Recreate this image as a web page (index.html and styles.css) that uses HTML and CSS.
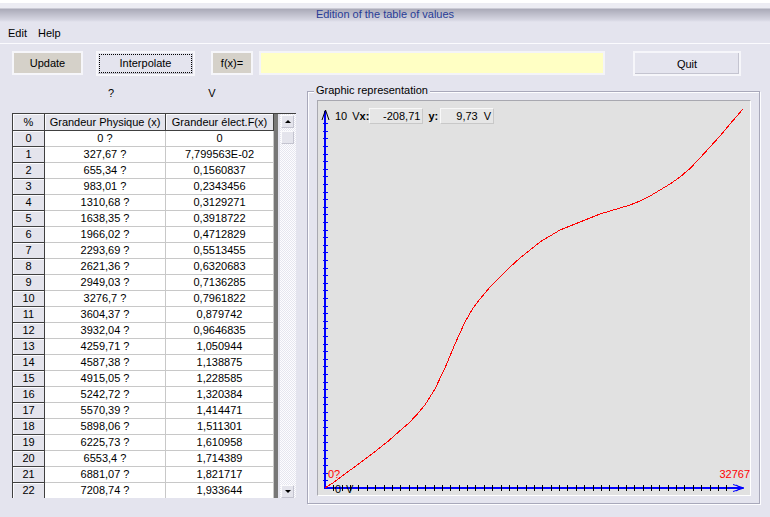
FILE: index.html
```html
<!DOCTYPE html>
<html>
<head>
<meta charset="utf-8">
<title>Edition of the table of values</title>
<link rel="stylesheet" href="styles.css">
</head>
<body>
<div class="window">
  <div class="titlebar">Edition of the table of values</div>
  <div class="menubar"><span class="menu">Edit</span><span class="menu">Help</span></div>
  <div class="toolbar">
    <button class="btn btn-beige btn-update">Update</button>
    <button class="btn btn-lav btn-interp"><span class="focus">Interpolate</span></button>
    <button class="btn btn-beige btn-fx">f(x)=</button>
    <div class="fx-input"></div>
    <button class="btn btn-lav btn-quit">Quit</button>
  </div>
  <div class="main">
    <div class="left">
      <div class="units"><span class="unit-x">?</span><span class="unit-y">V</span></div>
      <div class="grid-frame">
        <div class="grid-clip">
          <table class="grid">
            <colgroup><col class="c0"><col class="c1"><col class="c2"></colgroup>
            <thead><tr><th class="fix">%</th><th class="fix">Grandeur Physique (x)</th><th class="fix">Grandeur élect.F(x)</th></tr></thead>
            <tbody>
              <tr><td class="fix">0</td><td>0 ?</td><td>0</td></tr>
              <tr><td class="fix">1</td><td>327,67 ?</td><td>7,799563E-02</td></tr>
              <tr><td class="fix">2</td><td>655,34 ?</td><td>0,1560837</td></tr>
              <tr><td class="fix">3</td><td>983,01 ?</td><td>0,2343456</td></tr>
              <tr><td class="fix">4</td><td>1310,68 ?</td><td>0,3129271</td></tr>
              <tr><td class="fix">5</td><td>1638,35 ?</td><td>0,3918722</td></tr>
              <tr><td class="fix">6</td><td>1966,02 ?</td><td>0,4712829</td></tr>
              <tr><td class="fix">7</td><td>2293,69 ?</td><td>0,5513455</td></tr>
              <tr><td class="fix">8</td><td>2621,36 ?</td><td>0,6320683</td></tr>
              <tr><td class="fix">9</td><td>2949,03 ?</td><td>0,7136285</td></tr>
              <tr><td class="fix">10</td><td>3276,7 ?</td><td>0,7961822</td></tr>
              <tr><td class="fix">11</td><td>3604,37 ?</td><td>0,879742</td></tr>
              <tr><td class="fix">12</td><td>3932,04 ?</td><td>0,9646835</td></tr>
              <tr><td class="fix">13</td><td>4259,71 ?</td><td>1,050944</td></tr>
              <tr><td class="fix">14</td><td>4587,38 ?</td><td>1,138875</td></tr>
              <tr><td class="fix">15</td><td>4915,05 ?</td><td>1,228585</td></tr>
              <tr><td class="fix">16</td><td>5242,72 ?</td><td>1,320384</td></tr>
              <tr><td class="fix">17</td><td>5570,39 ?</td><td>1,414471</td></tr>
              <tr><td class="fix">18</td><td>5898,06 ?</td><td>1,511301</td></tr>
              <tr><td class="fix">19</td><td>6225,73 ?</td><td>1,610958</td></tr>
              <tr><td class="fix">20</td><td>6553,4 ?</td><td>1,714389</td></tr>
              <tr><td class="fix">21</td><td>6881,07 ?</td><td>1,821717</td></tr>
              <tr><td class="fix">22</td><td>7208,74 ?</td><td>1,933644</td></tr>
            </tbody>
          </table>
        </div>
        <div class="grid-bar"></div>
        <div class="vscroll">
          <div class="sb-btn sb-up"></div>
          <div class="sb-thumb"></div>
          <div class="sb-track"></div>
          <div class="sb-btn sb-down"></div>
        </div>
      </div>
    </div>
    <div class="group">
      <span class="group-label">Graphic representation</span>
      <div class="plot">
        <svg class="chart" width="432" height="394" viewBox="318 101 432 394" xmlns="http://www.w3.org/2000/svg">
          <rect x="324" y="111" width="2" height="378" fill="#0000ff"/>
          <rect x="325" y="487" width="418" height="2" fill="#0000ff"/>
          <path shape-rendering="crispEdges" stroke="#0000ff" stroke-width="1" fill="none" d="M323 480.5h5M323 473.5h5M323 465.5h5M323 458.5h5M323 450.5h5M323 442.5h5M323 435.5h5M323 427.5h5M323 420.5h5M323 412.5h5M323 404.5h5M323 397.5h5M323 389.5h5M323 382.5h5M323 374.5h5M323 366.5h5M323 359.5h5M323 351.5h5M323 344.5h5M323 336.5h5M323 328.5h5M323 321.5h5M323 313.5h5M323 306.5h5M323 298.5h5M323 290.5h5M323 283.5h5M323 275.5h5M323 268.5h5M323 260.5h5M323 252.5h5M323 245.5h5M323 237.5h5M323 230.5h5M323 222.5h5M323 214.5h5M323 207.5h5M323 199.5h5M323 192.5h5M323 184.5h5M323 176.5h5M323 169.5h5M323 161.5h5M323 154.5h5M323 146.5h5M323 138.5h5M323 131.5h5M323 123.5h5"/>
          <path shape-rendering="crispEdges" stroke="#000" stroke-width="1" fill="none" d="M333.5 485v6M342.5 485v6M350.5 485v6M358.5 485v6M367.5 485v6M375.5 485v6M384.5 485v6M392.5 485v6M400.5 485v6M409.5 485v6M417.5 485v6M425.5 485v6M434.5 485v6M442.5 485v6M450.5 485v6M459.5 485v6M467.5 485v6M475.5 485v6M484.5 485v6M492.5 485v6M501.5 485v6M509.5 485v6M517.5 485v6M526.5 485v6M534.5 485v6M542.5 485v6M551.5 485v6M559.5 485v6M567.5 485v6M576.5 485v6M584.5 485v6M593.5 485v6M601.5 485v6M609.5 485v6M618.5 485v6M626.5 485v6M634.5 485v6M643.5 485v6M651.5 485v6M659.5 485v6M668.5 485v6M676.5 485v6M684.5 485v6M693.5 485v6M701.5 485v6M710.5 485v6M718.5 485v6M726.5 485v6"/>
          <polyline fill="none" stroke="#000" stroke-width="1" points="322,120 325.5,110 329,120"/>
          <polyline fill="none" stroke="#0000ff" stroke-width="1" points="733,484.5 744,488 733,491.5"/>
          <polyline fill="none" stroke="#0000ff" stroke-width="1" points="736,485 741,488 736,491"/>
          <polyline fill="none" stroke="#ff0000" stroke-width="1" shape-rendering="crispEdges" points="325,488 335,481.5 346,473.1 356,466 367,457.7 377,450 388,441.3 398,432.5 409,422.9 417,414.5 425,404.9 435,388.9 445,367.9 455,343.9 465,321.9 473,308 480,299 490,287 500,277 510,267 520,258 530,250 540,242 550,236 560,230 570,226 580,222 590,218 600,214 610,211 620,208 630,205 640,201 650,196 660,190 670,184 680,177 690,168.5 700,158 710,147 720,136 730,124 743,109"/>
          <text class="lbl-red" x="328" y="478">0?</text>
          <text class="lbl-red" x="750" y="478" text-anchor="end">32767</text>
          <text class="lbl-blk" x="335" y="493">0</text>
          <text class="lbl-blk" x="346" y="493">V</text>
        </svg>
        <div class="readout">
          <span class="r-max">10</span>
          <span class="r-v">V</span><span class="r-bold r-x">x:</span>
          <span class="r-box r-box1">-208,71</span>
          <span class="r-bold r-y">y:</span>
          <span class="r-box r-box2">9,73&nbsp;&nbsp;V</span>
        </div>
      </div>
    </div>
  </div>
</div>
</body>
</html>
```
FILE: styles.css
```css
html, body {
  margin: 0;
  padding: 0;
}
body {
  width: 770px;
  height: 517px;
  overflow: hidden;
  background: #e4e4ee;
  font: 11px "Liberation Sans", Arial, sans-serif;
  color: #000;
}
.window {
  width: 770px;
  height: 517px;
}
.titlebar {
  box-sizing: border-box;
  height: 22px;
  padding-top: 8px;
  line-height: 13px;
  text-align: center;
  color: #283c96;
  background: linear-gradient(to bottom, #ffffff 0, #ffffff 3px, #ececf3 3px, #ececf3 8px, #aaaab8 9px, #d6d6e2 20px, #e4e4ee 22px);
}
.menubar {
  box-sizing: border-box;
  height: 22px;
  padding: 5px 0 0 8px;
  line-height: 13px;
  border-bottom: 1px solid #fbfbfe;
  display: flex;
  gap: 11px;
}
.toolbar {
  display: flex;
  align-items: flex-start;
  padding: 7px 0 0 12px;
  height: 25px;
}
.btn {
  box-sizing: border-box;
  font: inherit;
  color: #000;
  padding: 0;
  margin: 0;
  height: 24px;
  line-height: 20px;
  border: 2px solid #f6f6fa;
  outline: none;
}
.btn-beige {
  background: #d5d1c9;
}
.btn-lav {
  background: #e4e4ee;
  box-shadow: inset -1px -1px 0 #c4c4d0;
}
.btn-update {
  width: 71px;
}
.btn-interp {
  width: 99px;
  height: 25px;
  margin-left: 13px;
  padding: 1px;
}
.focus {
  display: block;
  border: 1px dotted #000;
  line-height: 17px;
}
.btn-fx {
  width: 42px;
  margin-left: 16px;
}
.fx-input {
  box-sizing: border-box;
  width: 346px;
  height: 24px;
  margin-left: 6px;
  background: #ffffc4;
  border: 2px solid #f4f4f8;
}
.btn-quit {
  width: 108px;
  height: 25px;
  margin-left: 28px;
}
.main {
  display: flex;
  align-items: flex-start;
  padding-left: 12px;
}
.left {
  width: 284px;
}
.units {
  display: flex;
  padding-top: 11px;
  height: 13px;
  line-height: 13px;
}
.unit-x {
  margin-left: 96px;
}
.unit-y {
  margin-left: 94px;
}
.grid-frame {
  box-sizing: border-box;
  margin-top: 13px;
  width: 284px;
  height: 385px;
  border-top: 1px solid #404040;
  border-left: 1px solid #404040;
  display: flex;
  overflow: hidden;
}
.grid-clip {
  width: 261px;
  height: 384px;
  overflow: hidden;
  background: #fff;
}
.grid {
  width: 261px;
  table-layout: fixed;
  border-collapse: separate;
  border-spacing: 0;
}
.c0 { width: 32px; }
.c1 { width: 121px; }
.c2 { width: 108px; }
.grid th, .grid td {
  padding: 0;
  text-align: center;
  font-weight: normal;
  white-space: nowrap;
  overflow: hidden;
}
.grid th {
  height: 16px;
  line-height: 16px;
}
.grid td {
  height: 15px;
  line-height: 15px;
  background: #fff;
  border-right: 1px solid #c8c8c8;
  border-bottom: 1px solid #c8c8c8;
}
.grid .fix {
  background: #e4e4ec;
  border-right: 1px solid #404040;
  border-bottom: 1px solid #404040;
  box-shadow: inset 1px 1px 0 #fbfbfe;
}
.grid-bar {
  width: 4px;
  height: 100%;
  background: #777777;
}
.vscroll {
  width: 16px;
  margin-left: 2px;
  height: 384px;
  display: flex;
  flex-direction: column;
  background: repeating-conic-gradient(#fdfdff 0 25%, #e6e6ef 0 50%) 0 0 / 2px 2px;
}
.sb-btn, .sb-thumb {
  box-sizing: border-box;
  width: 13px;
  height: 13px;
  margin-left: 1px;
  background: #e4e4ec;
  border: 1px solid #fafafc;
  border-right-color: #c4c4d0;
  border-bottom-color: #c4c4d0;
  display: flex;
  align-items: center;
  justify-content: center;
}
.sb-up {
  margin-top: 1px;
}
.sb-thumb {
  margin-top: 3px;
}
.sb-track {
  flex: 1;
}
.sb-down {
  margin-bottom: 0;
}
.sb-up::before {
  content: "";
  border-left: 3px solid transparent;
  border-right: 3px solid transparent;
  border-bottom: 3px solid #000;
}
.sb-down::before {
  content: "";
  border-left: 3px solid transparent;
  border-right: 3px solid transparent;
  border-top: 3px solid #000;
}
.group {
  position: relative;
  box-sizing: border-box;
  width: 453px;
  height: 413px;
  margin: 15px 0 0 11px;
  padding: 8px 0 0 9px;
  border: 1px solid #a8a8ba;
  box-shadow: inset 1px 1px 0 #fdfdff, 1px 1px 0 #fdfdff;
}
.group-label {
  position: absolute;
  top: -8px;
  left: 6px;
  padding: 0 2px;
  line-height: 13px;
  background: #e4e4ee;
}
.plot {
  position: relative;
  box-sizing: border-box;
  width: 434px;
  height: 396px;
  border: 1px solid;
  border-color: #a8a8b0 #ffffff #ffffff #a8a8b0;
  background: #e1e1e1;
}
.chart {
  display: block;
}
.lbl-red {
  font: 11px "Liberation Sans", Arial, sans-serif;
  fill: #ff0000;
}
.lbl-blk {
  font: 11px "Liberation Sans", Arial, sans-serif;
  fill: #000;
}
.readout {
  position: absolute;
  left: 17px;
  top: 7px;
  height: 16px;
  display: flex;
  align-items: center;
  line-height: 13px;
}
.r-v {
  margin-left: 5px;
}
.r-bold {
  font-weight: bold;
}
.r-x {
  margin-left: 0;
}
.r-box {
  box-sizing: border-box;
  height: 16px;
  line-height: 14px;
  text-align: right;
  padding-right: 2px;
  background: #e6e6e6;
  border: 1px solid #f8f8f8;
  border-right-color: #c8c8c8;
  border-bottom-color: #c8c8c8;
}
.r-box1 {
  width: 54px;
  margin-left: 0;
}
.r-y {
  margin-left: 5px;
}
.r-box2 {
  width: 54px;
  margin-left: 2px;
}
```
